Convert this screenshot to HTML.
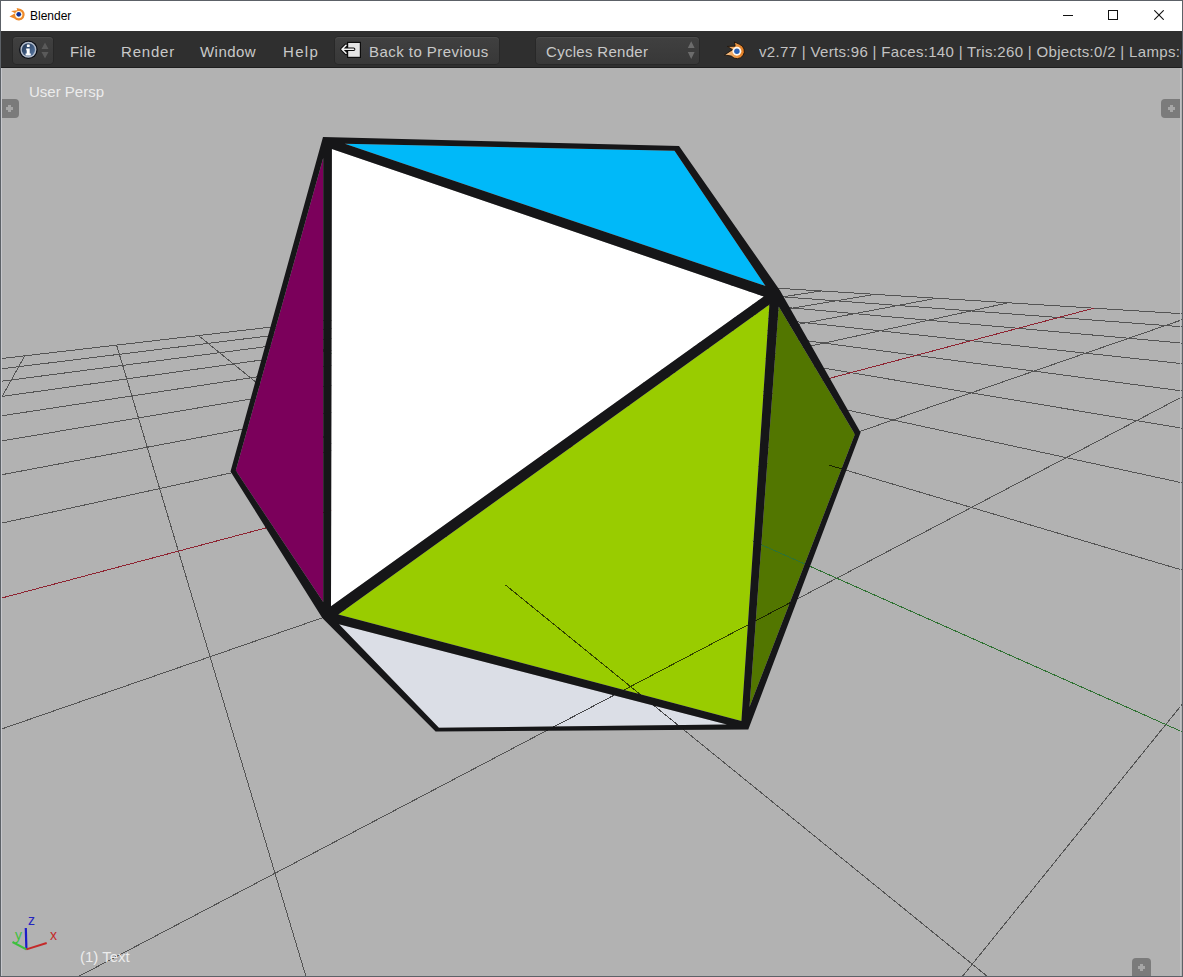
<!DOCTYPE html>
<html><head><meta charset="utf-8"><style>
html,body{margin:0;padding:0;}
body{width:1183px;height:977px;overflow:hidden;position:relative;background:#5c6167;font-family:"Liberation Sans",sans-serif;}
.abs{position:absolute;}
#title{left:1px;top:1px;width:1181px;height:30px;background:#fff;}
#menu{left:1px;top:31px;width:1181px;height:36px;background:#2f2f2f;}
#menusep{left:1px;top:67px;width:1181px;height:1px;background:#1e1e1e;}
#view{left:1px;top:68px;width:1181px;height:908px;background:#b2b2b2;overflow:hidden;}
.mi{position:absolute;top:43px;font-size:15px;color:#c9c9c9;line-height:18px;white-space:nowrap;letter-spacing:0.45px;}
.btn{position:absolute;background:linear-gradient(#404040,#383838);border-radius:4px;box-shadow:inset 0 1px 0 #4a4a4a, 0 0 0 1px #282828;}
</style></head><body>
<div id="title" class="abs"></div>
<svg class="abs" style="left:0px;top:0px" width="40" height="30" viewBox="0 0 40 30">
 <g transform="translate(18.75 14.6) scale(5.9)"><path d="M-1.58 0.34 L-0.62 -0.22 L-1.3 -0.62 L-0.25 -0.72 L-0.36 -1.1 L0.35 -0.93 A1 1 0 1 1 -0.75 0.66 Z" fill="#ef8a2a"/>
 <circle cx="0" cy="0" r="0.62" fill="#fffbe8"/><circle cx="0" cy="-0.05" r="0.4" fill="#12319a"/></g>
</svg>
<div class="abs" style="left:30px;top:8px;font-size:12px;color:#000;line-height:16px">Blender</div>
<div class="abs" style="left:1063px;top:15px;width:10px;height:1px;background:#111"></div>
<div class="abs" style="left:1108px;top:10px;width:8px;height:8px;border:1px solid #111"></div>
<svg class="abs" style="left:1154px;top:10px" width="10" height="10" viewBox="0 0 10 10"><path d="M0.3 0.3L9.7 9.7M9.7 0.3L0.3 9.7" stroke="#111" stroke-width="1.1"/></svg>
<div id="menu" class="abs"></div>
<div id="menusep" class="abs"></div>
<div class="btn" style="left:13px;top:37px;width:40px;height:27px;"></div>
<svg class="abs" style="left:12px;top:36px" width="32" height="30" viewBox="0 0 32 30">
 <defs><linearGradient id="ig" x1="0" y1="0" x2="1" y2="1"><stop offset="0" stop-color="#1f3350"/><stop offset="1" stop-color="#5b7ba6"/></linearGradient></defs>
 <circle cx="16.4" cy="13.75" r="9.3" fill="#0a0e16"/><circle cx="16.4" cy="13.75" r="8" fill="#b3bccb"/><circle cx="16.4" cy="13.75" r="6.6" fill="url(#ig)"/>
 <rect x="14.9" y="8.6" width="2.8" height="2.4" rx="0.6" fill="#fff"/><path d="M14.2 12.4h3.5v5.2h1.1v1.8h-5.2v-1.8h1.1v-3.4h-0.5z" fill="#fff"/>
</svg>
<svg class="abs" style="left:40px;top:42px" width="10" height="18" viewBox="0 0 10 18"><path d="M5 0.5L8.5 7H1.5Z M5 16.5L8.5 10H1.5Z" fill="#5a5a5a"/></svg>
<div class="mi" style="left:70px">File</div>
<div class="mi" style="left:121px;letter-spacing:0.8px">Render</div>
<div class="mi" style="left:200px">Window</div>
<div class="mi" style="left:283px;letter-spacing:1.3px">Help</div>
<div class="btn" style="left:335px;top:37px;width:164px;height:27px;"></div>
<svg class="abs" style="left:338px;top:40px" width="26" height="20" viewBox="338 40 26 20">
 <rect x="347.6" y="42.4" width="12.8" height="15" fill="#e4e4e4" stroke="#0c0c0c" stroke-width="1.2"/>
 <path d="M353.6 49.3H342.6M346 45.3L342 49.3L346 53.3" fill="none" stroke="#0c0c0c" stroke-width="3.6" stroke-linecap="round" stroke-linejoin="round"/>
 <path d="M353.6 49.3H342.6M346 45.3L342 49.3L346 53.3" fill="none" stroke="#f2f2f2" stroke-width="1.6" stroke-linecap="round" stroke-linejoin="round"/>
</svg>
<div class="mi" style="left:369px">Back to Previous</div>
<div class="btn" style="left:536px;top:37px;width:163px;height:27px;"></div>
<div class="mi" style="left:546px;letter-spacing:0.3px">Cycles Render</div>
<svg class="abs" style="left:686px;top:40px" width="10" height="20" viewBox="686 40 10 20"><path d="M691.2 41.3L694.6 48.1H687.8Z M691.2 59L694.6 51.9H687.8Z" fill="#6c6c6c"/></svg>
<svg class="abs" style="left:710px;top:36px" width="40" height="30" viewBox="0 0 40 30">
 <defs><linearGradient id="lg" x1="0" y1="0" x2="1" y2="0"><stop offset="0" stop-color="#f6c896"/><stop offset="0.55" stop-color="#ec9a4a"/><stop offset="1" stop-color="#e07a20"/></linearGradient></defs>
 <g transform="translate(26.9 15.2) scale(7.4)"><path d="M-1.684 0.501 L-0.586 -0.208 L-1.277 -0.643 L-0.236 -0.681 L-0.331 -1.249 L0.35 -0.93 A1 1 0 1 1 -0.75 0.66 Z" fill="url(#lg)" stroke="#1a1008" stroke-width="0.12" stroke-linejoin="round"/>
 <circle cx="0" cy="0" r="0.6" fill="#fff8ee"/><circle cx="0" cy="0" r="0.37" fill="#2a60b4"/></g>
</svg>
<div class="mi" style="left:759px;color:#c2c2c2;letter-spacing:0.32px;width:422px;overflow:hidden">v2.77 | Verts:96 | Faces:140 | Tris:260 | Objects:0/2 | Lamps:0/1 | Mem:</div>
<div id="view" class="abs">
<svg width="1181" height="908" viewBox="1 68 1181 908" style="position:absolute;left:0;top:0">
 <defs><clipPath id="below"><polygon points="322.3,618 757,540 860.6,432.6 748.3,729.5 435.6,731.4"/></clipPath></defs>
 <g fill="none" stroke-width="1" shape-rendering="crispEdges">
  <path d="M-5.0 409.4L24.7 355.8M957.9 982.0L1188.0 697.0M307.6 982.0L116.6 345.1M68.0 982.0L1188.0 393.7M994.2 982.0L198.4 335.5M-5.0 731.3L1188.0 317.7M1188.0 571.8L337.9 319.2M-5.0 524.6L1008.6 302.7M1188.0 484.1L397.8 312.3M-5.0 476.0L936.5 298.2M1188.0 429.2L452.3 305.9M-5.0 442.0L874.8 294.3M1188.0 391.7L502.2 300.1M-5.0 416.8L821.5 290.9M1188.0 364.3L547.9 294.7M-5.0 397.4L775.0 288.0M1188.0 343.6L590.1 289.8M-5.0 382.1L734.0 285.4M1188.0 327.2L629.0 285.3M-5.0 369.6L697.6 283.1M1188.0 314.1L665.0 281.1M-5.0 359.3L665.0 281.1" stroke="#545454"/>
  <path d="M1188.0 734.4L271.8 327.0" stroke="#2f7232" /><path d="M-5.0 599.8L1094.1 308.1" stroke="#8e2432" />
 </g>
 <polygon points="344.8,143.8 674.5,150.8 765.5,286" fill="#00b9f9"/><polygon points="331.9,148.9 763.8,296.5 331,606.2" fill="#ffffff"/><polygon points="323.2,158 323.2,602 235.8,470.5" fill="#7b005b"/><polygon points="769.4,304.6 338.3,614.4 741.4,721" fill="#99cc00"/><polygon points="778.7,306.6 854.9,434.2 749.5,707" fill="#527600"/><polygon points="339,624.2 438.9,727.8 727,724.6" fill="#dbdee6"/>
 <g fill="none" stroke-width="1" shape-rendering="crispEdges" clip-path="url(#below)">
  <path d="M-5.0 409.4L24.7 355.8M957.9 982.0L1188.0 697.0M307.6 982.0L116.6 345.1M68.0 982.0L1188.0 393.7M994.2 982.0L198.4 335.5M-5.0 731.3L1188.0 317.7M1188.0 571.8L337.9 319.2M-5.0 524.6L1008.6 302.7M1188.0 484.1L397.8 312.3M-5.0 476.0L936.5 298.2M1188.0 429.2L452.3 305.9M-5.0 442.0L874.8 294.3M1188.0 391.7L502.2 300.1M-5.0 416.8L821.5 290.9M1188.0 364.3L547.9 294.7M-5.0 397.4L775.0 288.0M1188.0 343.6L590.1 289.8M-5.0 382.1L734.0 285.4M1188.0 327.2L629.0 285.3M-5.0 369.6L697.6 283.1M1188.0 314.1L665.0 281.1M-5.0 359.3L665.0 281.1" stroke="#000" stroke-opacity="0.68"/>
  <path d="M1188.0 734.4L271.8 327.0" stroke="#2f7232" /><path d="M-5.0 599.8L1094.1 308.1" stroke="#8e2432" />
 </g>
 <path fill-rule="evenodd" fill="#161618" d="M323 137 L679 146 L780 290.4 L860.6 432.6 L748.3 729.5 L435.6 731.4 L322.3 618 L230.5 471.4ZM344.8 143.8 L674.5 150.8 L765.5 286ZM331.9 148.9 L763.8 296.5 L331 606.2ZM323.2 158 L323.2 602 L235.8 470.5ZM769.4 304.6 L338.3 614.4 L741.4 721ZM778.7 306.6 L854.9 434.2 L749.5 707ZM339 624.2 L438.9 727.8 L727 724.6Z"/>
</svg>
<div class="abs" style="left:28px;top:15px;font-size:15px;color:#ececec;line-height:18px">User Persp</div>
<div class="abs" style="left:1px;top:31px;width:17px;height:19px;background:#7b7b7b;border-radius:0 4px 4px 0"></div><div class="abs" style="left:5px;top:39px;width:7px;height:3px;background:#a6a6a6"></div><div class="abs" style="left:7px;top:37px;width:3px;height:7px;background:#a6a6a6"></div>
<div class="abs" style="left:1160px;top:31px;width:20px;height:19px;background:#7b7b7b;border-radius:4px 0 0 4px"></div><div class="abs" style="left:1167px;top:39px;width:7px;height:3px;background:#a6a6a6"></div><div class="abs" style="left:1169px;top:37px;width:3px;height:7px;background:#a6a6a6"></div>
<div class="abs" style="left:1131px;top:890px;width:19px;height:18px;background:#7b7b7b;border-radius:4px 4px 0 0"></div><div class="abs" style="left:1137px;top:898px;width:7px;height:3px;background:#a6a6a6"></div><div class="abs" style="left:1139px;top:896px;width:3px;height:7px;background:#a6a6a6"></div>
<svg class="abs" style="left:8px;top:842px" width="60" height="45" viewBox="0 0 60 45">
 <path d="M17.4 39.4L16.8 18" stroke="#1c1cc8" stroke-width="2.2"/>
 <path d="M17.4 39.4L3.5 32" stroke="#3cc03c" stroke-width="2"/>
 <path d="M17.4 39.4L37.7 33" stroke="#c42a2a" stroke-width="2"/>
</svg>
<div class="abs" style="left:27px;top:845px;font-size:14px;color:#2424c0;line-height:14px">z</div>
<div class="abs" style="left:14px;top:860px;font-size:14px;color:#3cc03c;line-height:14px">y</div>
<div class="abs" style="left:49px;top:860px;font-size:14px;color:#c42a2a;line-height:14px">x</div>
<div class="abs" style="left:79px;top:880px;font-size:15px;color:#ececec;line-height:18px">(1) Text</div>
<div class="abs" style="left:0;top:0;width:1px;height:908px;background:#c6c7cc"></div><div class="abs" style="left:1179px;top:0;width:1px;height:908px;background:#bfc1c5"></div>
</div>
</body></html>
